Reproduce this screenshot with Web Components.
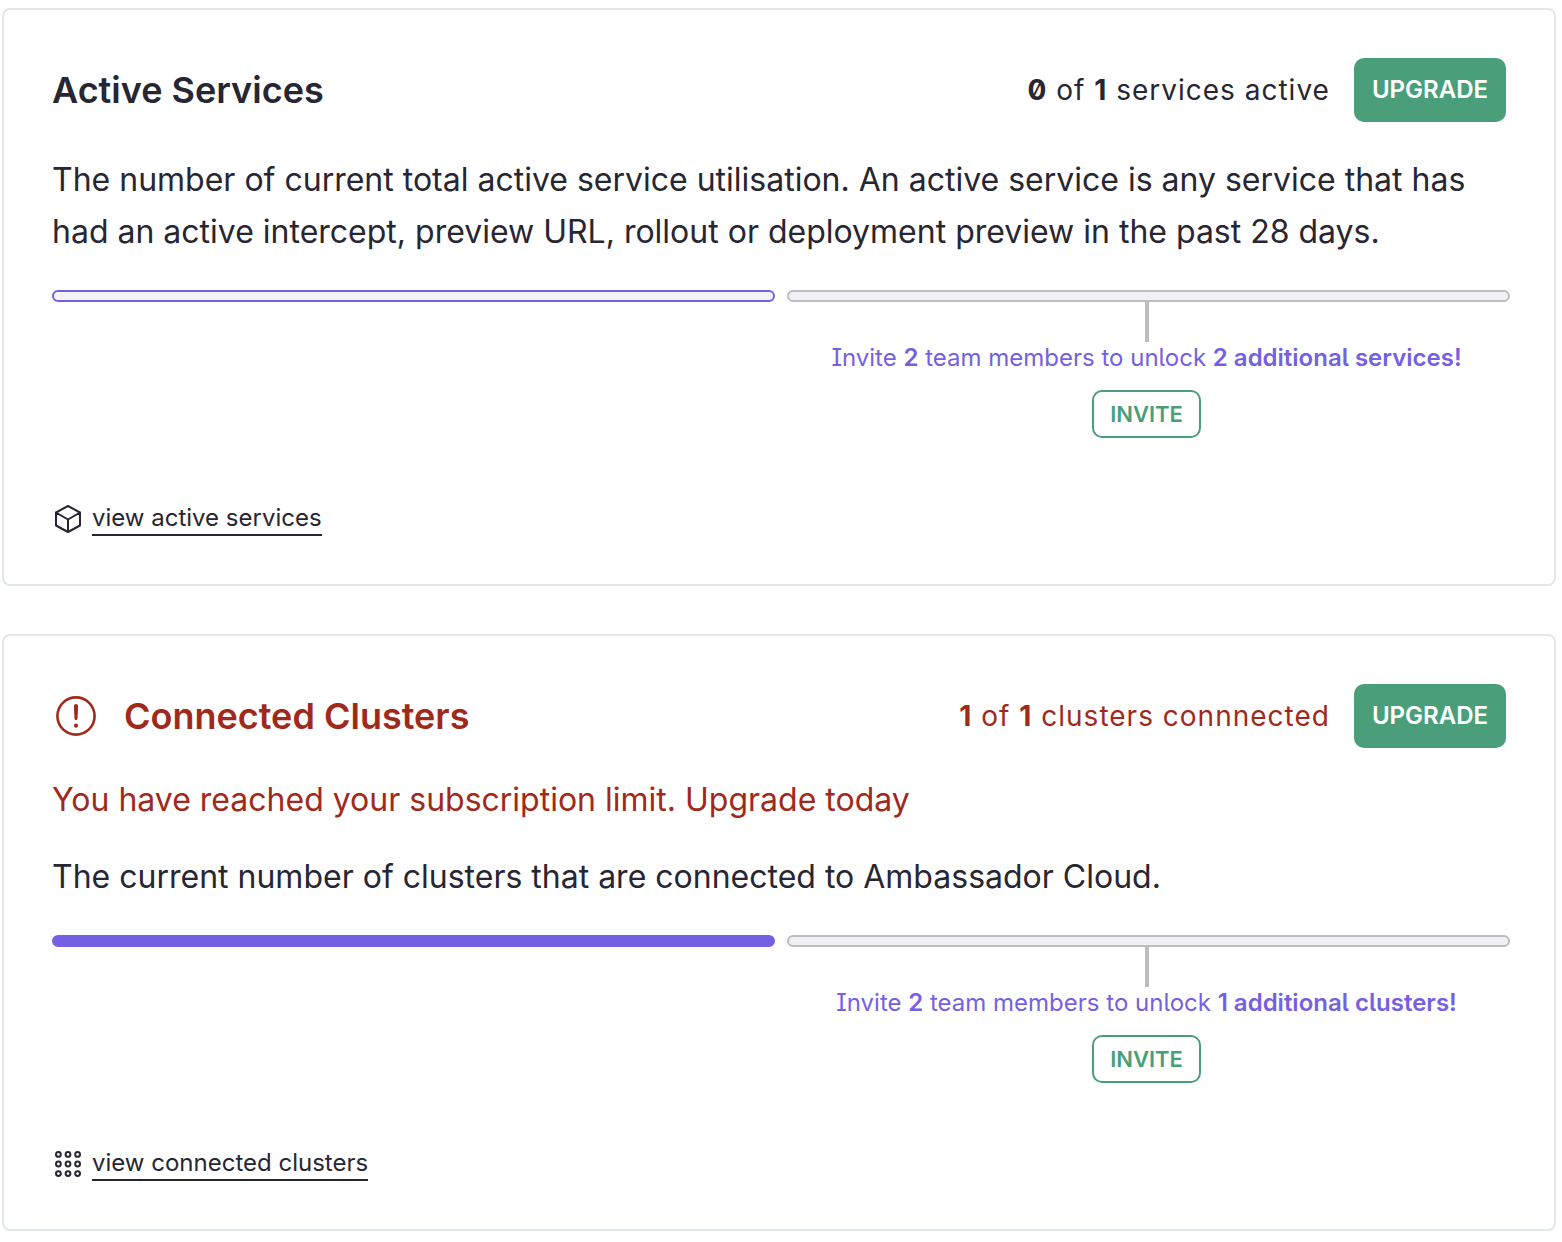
<!DOCTYPE html>
<html lang="en">
<head>
<meta charset="utf-8">
<meta name="viewport" content="width=device-width, initial-scale=1">
<title>Subscription usage</title>
<style>
  body { margin: 0; background: #fff; color: #272632; font-family: Inter, "Liberation Sans", sans-serif; }
  b { font-weight: 700; }
  usage-meter b { font-weight: 600; }
</style>
</head>
<body>
<usage-page>
  <usage-card>
    <span slot="title">Active Services</span>
    <span slot="count"><b>0</b> of <b>1</b> services active</span>
    <span slot="description">The number of current total active service utilisation. An active service is any service that has had an active intercept, preview URL, rollout or deployment preview in the past 28 days.</span>
    <usage-meter slot="meter"><span>Invite <b>2</b> team members to unlock <b>2 additional services!</b></span></usage-meter>
    <icon-link slot="link" icon="cube">view active services</icon-link>
  </usage-card>
  <usage-card alert>
    <span slot="title">Connected Clusters</span>
    <span slot="count"><b>1</b> of <b>1</b> clusters connnected</span>
    <span slot="warning">You have reached your subscription limit. Upgrade today</span>
    <span slot="description">The current number of clusters that are connected to Ambassador Cloud.</span>
    <usage-meter slot="meter" full><span>Invite <b>2</b> team members to unlock <b>1 additional clusters!</b></span></usage-meter>
    <icon-link slot="link" icon="grid">view connected clusters</icon-link>
  </usage-card>
</usage-page>
<script>
class UsagePage extends HTMLElement {
  constructor() {
    super();
    this.attachShadow({ mode: 'open' }).innerHTML = `
      <style>
        :host { display: block; }
        main { display: flex; flex-direction: column; gap: 48px; padding: 8px 6px 8px 2px; }
      </style>
      <main><slot></slot></main>`;
  }
}

class ActionButton extends HTMLElement {
  constructor() {
    super();
    this.attachShadow({ mode: 'open' }).innerHTML = `
      <style>
        :host { display: block; flex: none; }
        button { display: block; box-sizing: border-box; height: 64px; padding: 0 18px; border: 0; border-radius: 10px;
          background: #4a9f7a; color: #fff; font: 600 24px/32px Inter, "Liberation Sans", sans-serif; cursor: pointer; }
        :host([outline]) button { height: 48px; padding: 0 16px; border: 2px solid #4a9f7a; background: #fff;
          color: #4a9f7a; font-size: 22px; }
      </style>
      <button type="button"><slot></slot></button>`;
  }
}

class UsageCard extends HTMLElement {
  constructor() {
    super();
    const alert = this.hasAttribute('alert');
    this.attachShadow({ mode: 'open' }).innerHTML = `
      <style>
        :host { display: block; }
        section { padding: 48px 44px 48px 48px; border: 2px solid #e1e7ea; border-radius: 8px; }
        header { display: flex; align-items: center; gap: 24px; padding-right: 4px; }
        h2 { flex: 1; margin: 0; font-size: 36px; line-height: 48px; font-weight: 600; }
        svg { flex: none; width: 48px; height: 48px; }
        .count { font-size: 28px; line-height: 40px; font-feature-settings: "zero"; letter-spacing: 1px; }
        p { margin: 0; font-size: 32px; line-height: 52px; }
        .warning { margin-top: 26px; }
        .description { margin-top: 32px; }
        .warning + .description { margin-top: 25px; }
        .meter { margin-top: 32px; }
        .link { margin-top: 64px; }
        :host([alert]) header, .warning { color: #9f2a1c; }
      </style>
      <section>
        <header>
          ${alert ? `<svg viewBox="0 0 48 48" fill="none" aria-hidden="true">
            <circle cx="24" cy="24" r="18.600" stroke="currentColor" stroke-width="2.600"/>
            <path d="M21.900 14.200a2.100 2.100 0 0 1 4.200 0l-.6 12.400a1.500 1.500 0 0 1-3 0z" fill="currentColor"/>
            <circle cx="24" cy="33.700" r="2.100" fill="currentColor"/></svg>` : ''}
          <h2><slot name="title"></slot></h2>
          <div class="count"><slot name="count"></slot></div>
          <action-button>UPGRADE</action-button>
        </header>
        ${alert ? '<p class="warning"><slot name="warning"></slot></p>' : ''}
        <p class="description"><slot name="description"></slot></p>
        <div class="meter"><slot name="meter"></slot></div>
        <div class="link"><slot name="link"></slot></div>
      </section>`;
  }
}

class UsageMeter extends HTMLElement {
  constructor() {
    super();
    this.attachShadow({ mode: 'open' }).innerHTML = `
      <style>
        :host { display: block; }
        .row { display: grid; grid-template-columns: 1fr 1fr; gap: 12px; }
        .bar { box-sizing: border-box; height: 12px; border: 2px solid #7461e2; border-radius: 6px; background: #f5f4fe; }
        :host([full]) .used { background: #7461e2; }
        .locked { border-color: #bdbdbd; background: #f0eff4; }
        .offer { display: flex; flex-direction: column; align-items: center; padding-right: 4px; }
        .stem { width: 4px; height: 40px; background: #bdbdbd; }
        .text { color: #7461e2; font-size: 24px; line-height: 32px; white-space: nowrap; font-feature-settings: "ss02"; }
        action-button { margin-top: 16px; }
      </style>
      <div class="row">
        <div class="bar used"></div>
        <div><div class="bar locked"></div>
          <div class="offer">
            <div class="stem"></div>
            <div class="text"><slot></slot></div>
            <action-button outline>INVITE</action-button>
          </div>
        </div>
      </div>`;
  }
}

class IconLink extends HTMLElement {
  constructor() {
    super();
    const steps = [6.4, 16, 25.6];
    const dots = steps.flatMap(y => steps.map(x => `<circle cx="${x}" cy="${y}" r="2.400"/>`)).join('');
    const art = this.getAttribute('icon') === 'grid' ? dots
      : '<path d="M16 3 28 9.500V22.500L16 29 4 22.500V9.500ZM4 9.500 16 16.500 28 9.500M16 16.500V29"/>';
    this.attachShadow({ mode: 'open' }).innerHTML = `
      <style>
        :host { display: flex; align-items: center; gap: 8px; }
        svg { width: 32px; height: 32px; flex: none; }
        a { color: inherit; text-decoration: none; font-size: 24px; line-height: 32px; border-bottom: 2px solid currentColor; }
      </style>
      <svg viewBox="0 0 32 32" fill="none" stroke="currentColor" stroke-width="2" stroke-linejoin="round" aria-hidden="true">${art}</svg>
      <a href="#"><slot></slot></a>`;
  }
}

customElements.define('usage-page', UsagePage);
customElements.define('action-button', ActionButton);
customElements.define('usage-card', UsageCard);
customElements.define('usage-meter', UsageMeter);
customElements.define('icon-link', IconLink);
</script>
</body>
</html>
